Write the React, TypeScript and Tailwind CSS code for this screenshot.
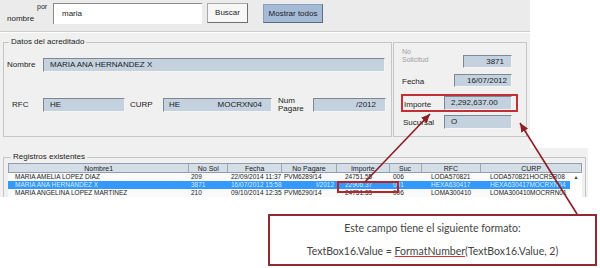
import React from 'react';

const inputCls =
  'flex items-center border-t border-l border-[#7f8790] border-b border-r border-b-[#f4f4f4] border-r-[#f4f4f4] bg-[#c4d2e0] text-[8px] text-[#1c1c1c] leading-none';

const headers = [
  { label: 'Nombre1', cls: 'w-[181px]' },
  { label: 'No Sol', cls: 'w-[39px]' },
  { label: 'Fecha', cls: 'w-[54px]' },
  { label: 'No Pagare', cls: 'w-[55px]' },
  { label: 'Importe', cls: 'w-[53px]' },
  { label: 'Suc', cls: 'w-[32px]' },
  { label: 'RFC', cls: 'w-[60px]' },
  { label: 'CURP', cls: 'w-[100px]' },
];

const rows = [
  {
    nombre: 'MARIA AMELIA LOPEZ DIAZ',
    sol: '209',
    fecha: '22/09/2014 11:37',
    pagare: 'PVM6289/14',
    importe: '24751.55',
    suc: '006',
    rfc: 'LODA570821',
    curp: 'LODA570821HOCRSR08',
    selected: false,
  },
  {
    nombre: 'MARIA ANA HERNANDEZ X',
    sol: '3871',
    fecha: '16/07/2012 15:58',
    pagare: 'I/2012',
    importe: '22906.37',
    suc: '001',
    rfc: 'HEXA630417',
    curp: 'HEXA630417MOCRXN04',
    selected: true,
  },
  {
    nombre: 'MARIA ANGELINA LOPEZ MARTINEZ',
    sol: '210',
    fecha: '09/10/2014 12:35',
    pagare: 'PVM6290/14',
    importe: '24751.55',
    suc: '006',
    rfc: 'LOMA300410',
    curp: 'LOMA300410MOCRRN01',
    selected: false,
  },
];

export default function App() {
  return (
    <div className="relative h-[268px] w-[600px] overflow-hidden bg-white font-['Liberation_Sans',Arial,sans-serif] text-[#1c1c1c]">
      {/* formulario */}
      <div className="w-[530px] bg-[#f0f0f0]">
        <div className="flex h-[32px] items-start border-b border-[#cdcdcd] bg-[#ebebeb] pt-[3px]">
          <div className="w-[53px] pl-[7px] leading-none">
            <div className="pl-[30px] text-[7px]">por</div>
            <div className="mt-[5px] text-[8px]">nombre</div>
          </div>
          <div className="flex h-[21px] w-[149px] items-center border-t border-l border-[#8a8a8a] bg-white pl-[8px] text-[8px]">
            maria
          </div>
          <button className="ml-[5px] h-[20px] w-[41px] border border-[#a9a9a9] border-b-[#6f6f6f] border-r-[#6f6f6f] bg-[#f7f7f7] text-[8px]">
            Buscar
          </button>
          <button className="ml-[15px] mt-[1px] h-[19px] w-[60px] border border-[#8d9fb6] border-b-[#5d6d80] border-r-[#5d6d80] bg-[#a5bad6] text-[8px]">
            Mostrar todos
          </button>
        </div>

        <div className="flex h-[116px] border-t border-white pl-[3px] pt-[4px]">
          <fieldset className="h-[100px] w-[389px] border border-[#c6c6c6] px-0">
            <legend className="ml-[5px] px-[2px] text-[8px] leading-[10px]">Datos del acreditado</legend>
            <div className="mt-[11px] flex h-[14px] items-center">
              <div className="w-[39px] pl-[3px] text-[8px]">Nombre</div>
              <div className={`${inputCls} h-[14px] w-[342px] pl-[6px]`}>MARIA ANA HERNANDEZ X</div>
            </div>
            <div className="mt-[26px] flex h-[14px] items-center">
              <div className="w-[39px] pl-[8px] text-[8px]">RFC</div>
              <div className={`${inputCls} h-[14px] w-[82px] pl-[6px]`}>HE</div>
              <div className="w-[38px] pl-[5px] text-[8px]">CURP</div>
              <div className={`${inputCls} h-[14px] w-[109px] justify-between pl-[5px] pr-[9px]`}>
                <span>HE</span>
                <span>MOCRXN04</span>
              </div>
              <div className="w-[41px] pl-[6px] text-[8px] leading-[8px]">
                Num
                <br />
                Pagare
              </div>
              <div className={`${inputCls} h-[14px] w-[73px] justify-end pr-[9px]`}>/2012</div>
            </div>
          </fieldset>

          <div className="ml-[1px] mt-[5px] h-[95px] w-[134px] border border-[#c6c6c6] pl-[8px]">
            <div className="mt-[5px] flex h-[20px]">
              <div className="w-[61px] text-[7px] leading-[8px] text-[#a0a0a0]">
                No
                <br />
                Solicitud
              </div>
              <div className={`${inputCls} h-[13px] w-[49px] self-end justify-end pr-[7px]`}>3871</div>
            </div>
            <div className="mt-[6px] flex h-[13px] items-center">
              <div className="w-[52px] pt-[3px] text-[8px]">Fecha</div>
              <div className={`${inputCls} h-[13px] w-[58px] justify-end pr-[4px]`}>16/07/2012</div>
            </div>
            <div className="ml-[-1px] mt-[7px] flex h-[18px] w-[117px] items-center border-2 border-[#c23036]">
              <div className="w-[41px] pl-[1px] pt-[3px] text-[8px]">Importe</div>
              <div className={`${inputCls} h-[14px] w-[68px] pl-[6px]`}>2,292,637.00</div>
            </div>
            <div className="mt-[3px] flex h-[14px] items-center">
              <div className="w-[42px] pl-[1px] pt-[2px] text-[8px]">Sucursal</div>
              <div className={`${inputCls} h-[14px] w-[68px] pl-[6px]`}>O</div>
            </div>
          </div>
        </div>
      </div>

      {/* registros */}
      <div className="h-[49px] w-[588px] overflow-hidden bg-[#f0f0f0] pl-[3px] pt-[4px]">
        <fieldset className="h-[60px] w-[583px] border border-[#c6c6c6] px-0 pl-[4px]">
          <legend className="ml-[3px] px-[2px] text-[8px] leading-[10px]">Registros existentes</legend>
          <div className="mt-[1px] w-[574px]">
            <div className="flex h-[10px] border border-[#8f9eb0] bg-[#d5dde7]">
              {headers.map((h) => (
                <div
                  key={h.label}
                  className={`${h.cls} border-r border-[#9aa7b6] text-center text-[7px] leading-[9px] last:border-r-0`}
                >
                  {h.label}
                </div>
              ))}
            </div>
            {rows.map((r, i) => (
              <div key={r.nombre} className="flex h-[8px] whitespace-nowrap text-[6.5px] leading-[8px]">
                <div className={`flex w-[562px] ${r.selected ? 'bg-[#3399ff] text-[#d6ebff]' : 'bg-[#fafafa] text-[#222]'}`}>
                  <div className="w-[181px] overflow-hidden pl-[7px]">{r.nombre}</div>
                  <div className="w-[39px] overflow-hidden pl-[2px]">{r.sol}</div>
                  <div className="w-[54px] overflow-hidden pl-[3px]">{r.fecha}</div>
                  <div className={`w-[55px] overflow-hidden ${r.selected ? 'pr-[3px] text-right' : 'pl-[2px]'}`}>{r.pagare}</div>
                  <div className="w-[53px] overflow-hidden pl-[8px]">{r.importe}</div>
                  <div className="w-[32px] overflow-hidden pl-[3px]">{r.suc}</div>
                  <div className="w-[60px] overflow-hidden pl-[9px]">{r.rfc}</div>
                  <div className="w-[88px] overflow-hidden pl-[8px]">{r.curp}</div>
                </div>
                <div className="flex w-[12px] items-center justify-center bg-white text-[5px] text-[#333]">
                  {i === 0 ? '▲' : ''}
                </div>
              </div>
            ))}
          </div>
        </fieldset>
      </div>

      {/* nota */}
      <div className="ml-[268px] mt-[17px] flex h-[52px] w-[329px] flex-col items-center border-2 border-[#8e2b30] pt-[6px] font-['Lato',sans-serif] text-[10.5px] leading-[12px] text-[#444]">
        <div>Este campo tiene el siguiente formato:</div>
        <div className="mt-[11px]">
          TextBox16.Value ={' '}
          <span className="underline decoration-[#d0343a]">FormatNumber</span>
          (TextBox16.Value, 2)
        </div>
      </div>

      {/* resaltado en la tabla */}
      <div className="absolute left-[337px] top-[181px] h-[12px] w-[62px] border-2 border-[#b3262c]" />

      {/* flechas */}
      <svg className="pointer-events-none absolute left-0 top-0" width="600" height="268">
        <defs>
          <marker id="ah" markerWidth="9" markerHeight="8" refX="9" refY="4" orient="auto" markerUnits="userSpaceOnUse">
            <path d="M0,0 L9,4 L0,8 z" fill="#8b1f24" />
          </marker>
        </defs>
        <line x1="365" y1="182" x2="430" y2="114" stroke="#8b1f24" strokeWidth="1.6" markerEnd="url(#ah)" />
        <line x1="577" y1="214" x2="520" y2="123" stroke="#8b1f24" strokeWidth="1.6" markerEnd="url(#ah)" />
      </svg>
    </div>
  );
}
